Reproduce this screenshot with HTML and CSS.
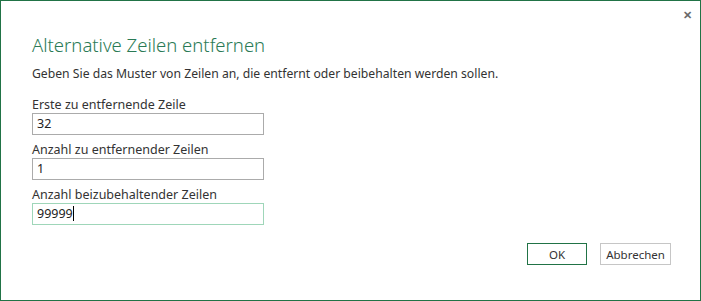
FILE: index.html
```html
<!DOCTYPE html>
<html lang="de">
<head>
    <meta charset="UTF-8">
    <title>Alternative Zeilen entfernen</title>
    <link rel="stylesheet" href="styles.css">
</head>
<body>
<div class="dialog">
    <div class="close">&#x2715;</div>
    <h1>Alternative Zeilen entfernen</h1>
    <p class="intro">Geben Sie das Muster von Zeilen an, die entfernt oder beibehalten werden sollen.</p>

    <div class="field">
        <label>Erste zu entfernende Zeile</label>
        <div class="input">32</div>
    </div>
    <div class="field">
        <label>Anzahl zu entfernender Zeilen</label>
        <div class="input">1</div>
    </div>
    <div class="field">
        <label>Anzahl beizubehaltender Zeilen</label>
        <div class="input focused">99999<span class="caret"></span></div>
    </div>

    <div class="buttons">
        <button class="primary">OK</button>
        <button class="cancel">Abbrechen</button>
    </div>
</div>
</body>
</html>
```

FILE: styles.css
```css
body {
    margin: 0;
    background-color: #fff;
    font-family: "Noto Sans", "Open Sans", sans-serif;
    color: #333;
}

.dialog {
    position: relative;
    box-sizing: border-box;
    width: 701px;
    height: 301px;
    border: 1px solid #217346;
    padding: 30px 29px 0 31px;
}

.close {
    position: absolute;
    top: 6px;
    right: 8px;
    font-size: 11px;
    font-weight: bold;
    color: #6a6a6a;
}

h1 {
    margin: 0;
    font-size: 18.5px;
    font-weight: 300;
    color: #2a7a55;
    line-height: 28px;
}

.intro {
    margin: 6px 0 13px;
    font-size: 12.2px;
    line-height: 18px;
}

.field {
    display: flex;
    flex-direction: column;
    margin-bottom: 6px;
}

.field label {
    font-size: 12.5px;
    line-height: 17px;
}

.input {
    box-sizing: border-box;
    width: 232px;
    height: 22px;
    border: 1px solid #ababab;
    padding: 0 4px;
    font-size: 12.5px;
    line-height: 20px;
    color: #222;
}

.input.focused {
    border-color: #9fd6b9;
}

.caret {
    display: inline-block;
    width: 1px;
    height: 15px;
    background-color: #000;
    vertical-align: -3px;
}

.buttons {
    display: flex;
    justify-content: flex-end;
    gap: 13px;
    margin-top: 18px;
}

button {
    box-sizing: border-box;
    height: 22px;
    width: 60px;
    padding: 0;
    background-color: #fff;
    border: 1px solid #c6c6c6;
    font-family: "Noto Sans", "Open Sans", sans-serif;
    font-size: 11.5px;
    color: #333;
}

button.primary {
    border-color: #217346;
}

button.cancel {
    width: 71px;
}
```
